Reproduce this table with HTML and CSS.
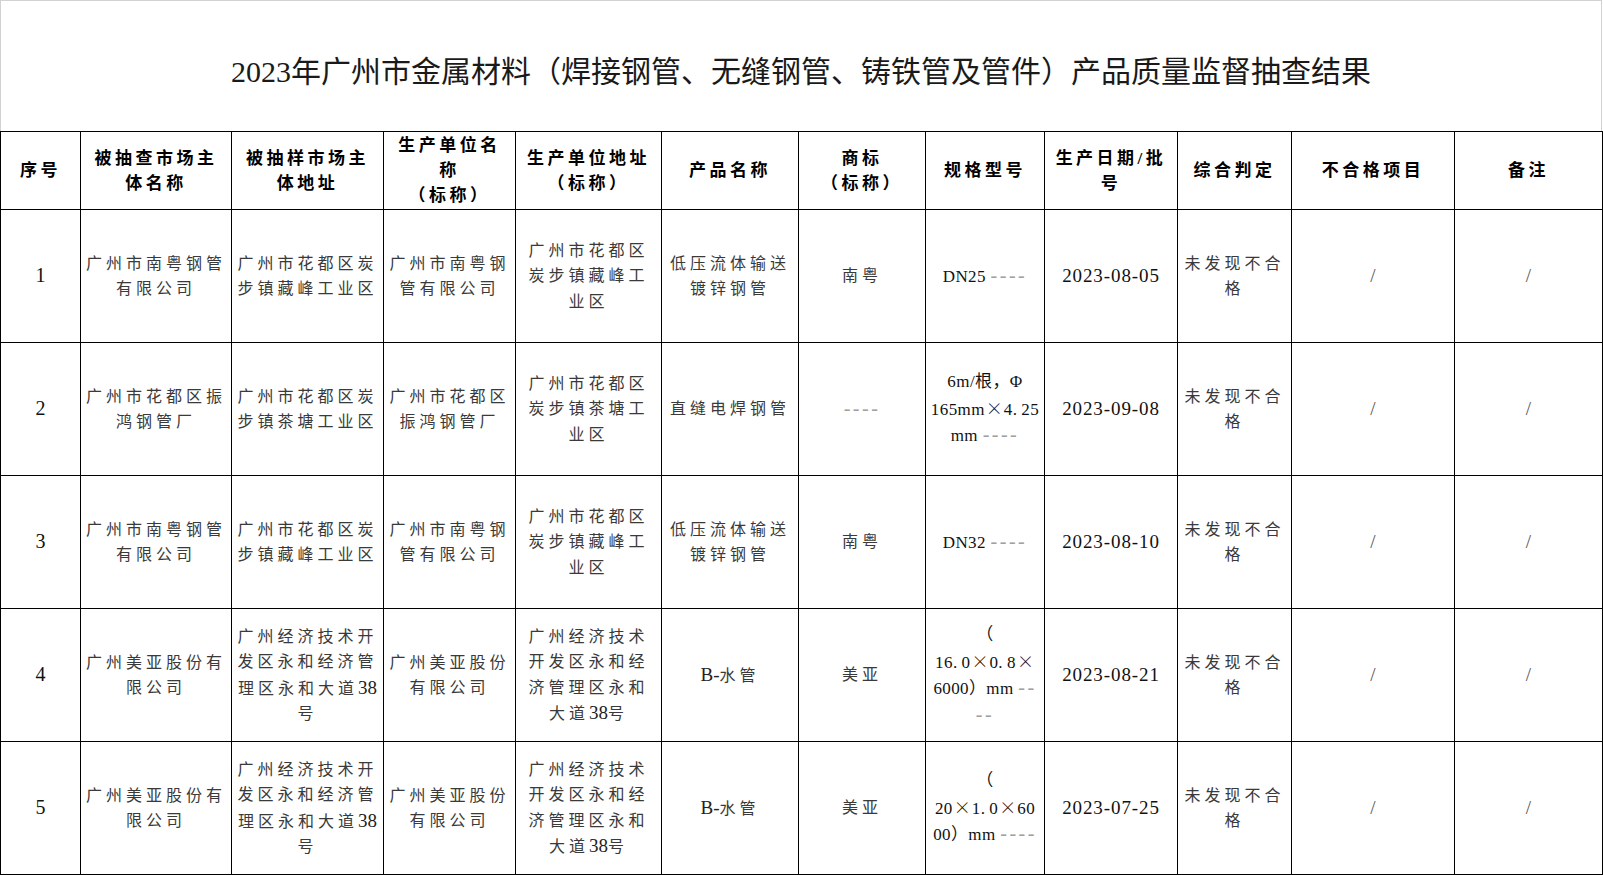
FILE: index.html
```html
<!DOCTYPE html>
<html lang="zh-CN">
<head>
<meta charset="utf-8">
<title>2023年广州市金属材料产品质量监督抽查结果</title>
<link rel="stylesheet" href="styles.css">
</head>
<body>
<div class="page">
  <div class="title">2023年广州市金属材料（焊接钢管、无缝钢管、铸铁管及管件）产品质量监督抽查结果</div>
  <table class="grid">
    <colgroup>
      <col class="w1"><col class="w2"><col class="w3"><col class="w4"><col class="w5"><col class="w6">
      <col class="w7"><col class="w8"><col class="w9"><col class="w10"><col class="w11"><col class="w12">
    </colgroup>
    <thead>
      <tr class="head">
        <th>序号</th>
        <th>被抽查市场主<br>体名称</th>
        <th>被抽样市场主<br>体地址</th>
        <th>生产单位名<br>称<br>（标称）</th>
        <th>生产单位地址<br>（标称）</th>
        <th>产品名称</th>
        <th>商标<br>（标称）</th>
        <th>规格型号</th>
        <th>生产日期/批<br>号</th>
        <th>综合判定</th>
        <th>不合格项目</th>
        <th>备注</th>
      </tr>
    </thead>
    <tbody>
      <tr>
        <td class="num">1</td>
        <td>广州市南粤钢管<br>有限公司</td>
        <td>广州市花都区炭<br>步镇藏峰工业区</td>
        <td>广州市南粤钢<br>管有限公司</td>
        <td>广州市花都区<br>炭步镇藏峰工<br>业区</td>
        <td>低压流体输送<br>镀锌钢管</td>
        <td>南粤</td>
        <td class="spec">DN25 <span class="dash">----</span></td>
        <td class="date">2023-08-05</td>
        <td>未发现不合<br>格</td>
        <td class="slash">/</td>
        <td class="slash">/</td>
      </tr>
      <tr>
        <td class="num">2</td>
        <td>广州市花都区振<br>鸿钢管厂</td>
        <td>广州市花都区炭<br>步镇茶塘工业区</td>
        <td>广州市花都区<br>振鸿钢管厂</td>
        <td>广州市花都区<br>炭步镇茶塘工<br>业区</td>
        <td>直缝电焊钢管</td>
        <td class="spec"><span class="dash">----</span></td>
        <td class="spec">6m/根，Φ<br>165mm<span class="x">×</span>4.<span class="gap"></span>25<br>mm <span class="dash">----</span></td>
        <td class="date">2023-09-08</td>
        <td>未发现不合<br>格</td>
        <td class="slash">/</td>
        <td class="slash">/</td>
      </tr>
      <tr>
        <td class="num">3</td>
        <td>广州市南粤钢管<br>有限公司</td>
        <td>广州市花都区炭<br>步镇藏峰工业区</td>
        <td>广州市南粤钢<br>管有限公司</td>
        <td>广州市花都区<br>炭步镇藏峰工<br>业区</td>
        <td>低压流体输送<br>镀锌钢管</td>
        <td>南粤</td>
        <td class="spec">DN32 <span class="dash">----</span></td>
        <td class="date">2023-08-10</td>
        <td>未发现不合<br>格</td>
        <td class="slash">/</td>
        <td class="slash">/</td>
      </tr>
      <tr>
        <td class="num">4</td>
        <td>广州美亚股份有<br>限公司</td>
        <td>广州经济技术开<br>发区永和经济管<br>理区永和大道<span class="n">38</span><br>号</td>
        <td>广州美亚股份<br>有限公司</td>
        <td>广州经济技术<br>开发区永和经<br>济管理区永和<br>大道<span class="n">38</span>号</td>
        <td><span class="n">B-</span>水管</td>
        <td>美亚</td>
        <td class="spec">（<br>16.<span class="gap"></span>0<span class="x">×</span>0.<span class="gap"></span>8<span class="x">×</span><br>6000）mm <span class="dash">--</span><br><span class="dash">--</span></td>
        <td class="date">2023-08-21</td>
        <td>未发现不合<br>格</td>
        <td class="slash">/</td>
        <td class="slash">/</td>
      </tr>
      <tr>
        <td class="num">5</td>
        <td>广州美亚股份有<br>限公司</td>
        <td>广州经济技术开<br>发区永和经济管<br>理区永和大道<span class="n">38</span><br>号</td>
        <td>广州美亚股份<br>有限公司</td>
        <td>广州经济技术<br>开发区永和经<br>济管理区永和<br>大道<span class="n">38</span>号</td>
        <td><span class="n">B-</span>水管</td>
        <td>美亚</td>
        <td class="spec">（<br>20<span class="x">×</span>1.<span class="gap"></span>0<span class="x">×</span>60<br>00）mm <span class="dash">----</span></td>
        <td class="date">2023-07-25</td>
        <td>未发现不合<br>格</td>
        <td class="slash">/</td>
        <td class="slash">/</td>
      </tr>
    </tbody>
  </table>
</div>
</body>
</html>
```

FILE: styles.css
```css
html, body {
  margin: 0;
  padding: 0;
  background: #ffffff;
}

body {
  font-family: "Liberation Serif", "Noto Sans CJK SC", serif;
  color: #222;
}

.page {
  width: 1602px;
}

.title {
  box-sizing: border-box;
  height: 131px;
  border: 1px solid #d2d2d2;
  border-bottom: none;
  display: flex;
  align-items: center;
  justify-content: center;
  font-family: "Liberation Serif", "Noto Sans CJK SC", serif;
  font-size: 30px;
  color: #1a1a1a;
  padding-top: 6px;
}

.grid {
  border-collapse: collapse;
  table-layout: fixed;
  width: 1602px;
}

.w1 { width: 80px; }
.w2 { width: 151px; }
.w3 { width: 152px; }
.w4 { width: 132px; }
.w5 { width: 146px; }
.w6 { width: 137px; }
.w7 { width: 127px; }
.w8 { width: 119px; }
.w9 { width: 133px; }
.w10 { width: 114px; }
.w11 { width: 163px; }
.w12 { width: 148px; }

.grid th,
.grid td {
  border: 1px solid #000;
  padding: 0;
  text-align: center;
  vertical-align: middle;
  white-space: nowrap;
  overflow: hidden;
}

.grid th {
  height: 77px;
  font-size: 17px;
  font-weight: bold;
  letter-spacing: 3.5px;
  line-height: 25px;
  color: #000;
}

.grid td {
  height: 132px;
  font-size: 16px;
  letter-spacing: 4px;
  line-height: 25.5px;
  color: #3a3a3a;
}

.grid td.num {
  font-size: 20px;
  letter-spacing: 0;
  color: #111;
}

.grid td.date {
  font-size: 19px;
  letter-spacing: 0.9px;
  color: #111;
}

.grid td.spec {
  font-size: 17px;
  letter-spacing: 0.4px;
  color: #111;
}

.n {
  font-size: 19px;
  letter-spacing: 0;
  color: #222;
}

.x {
  font-family: "Noto Sans CJK SC", sans-serif;
  font-size: 17px;
  font-weight: 300;
  padding: 0 1px;
  letter-spacing: 0;
}

.gap {
  display: inline-block;
  width: 4px;
}

.dash {
  color: #a0a0a0;
  font-size: 20px;
  letter-spacing: 2.5px;
}

.grid td.slash {
  font-size: 19px;
  letter-spacing: 0;
  color: #555;
}
```
